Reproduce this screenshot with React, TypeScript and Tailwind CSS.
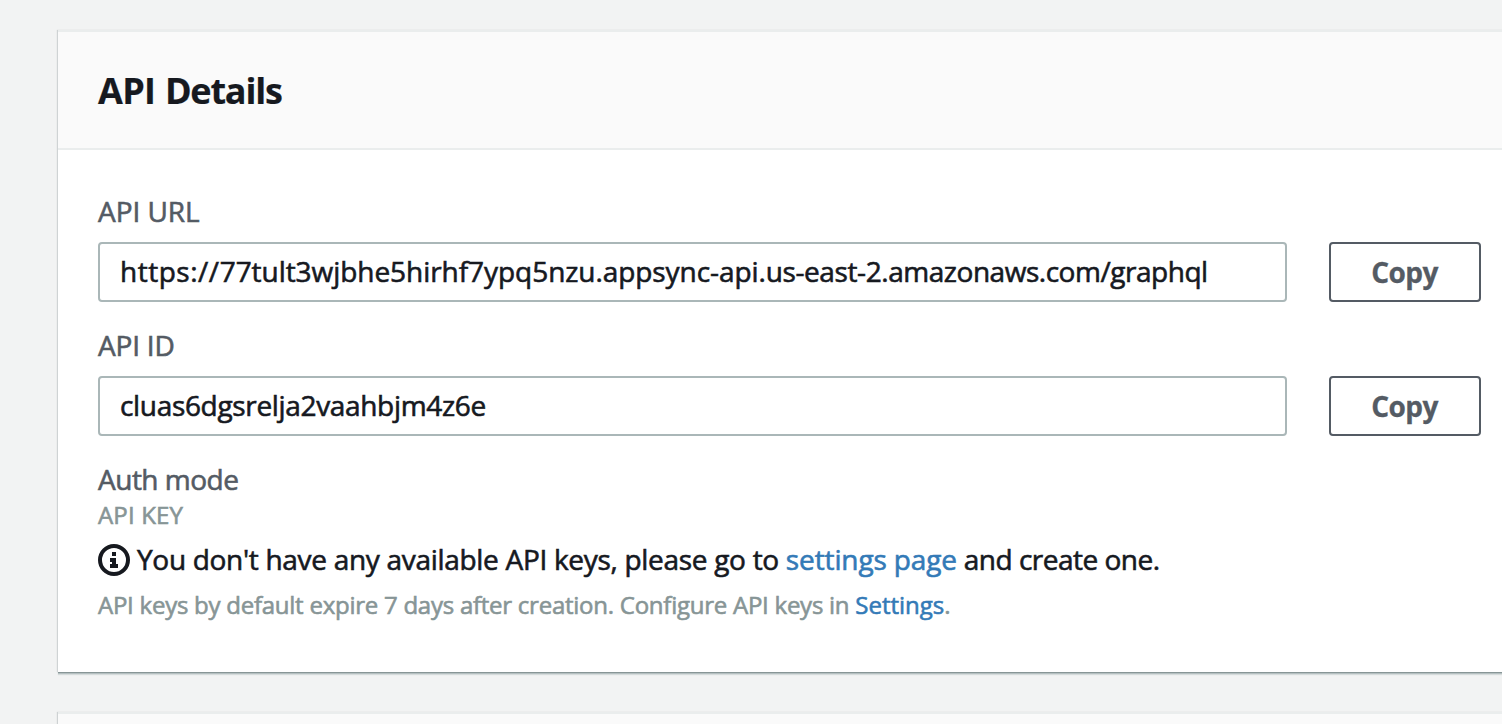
import type { ReactNode } from "react";

function Field({ label, labelClass, children }: { label: string; labelClass: string; children: ReactNode }) {
  return (
    <div className="flex flex-col">
      <label className={`h-[51px] whitespace-nowrap text-[28px] leading-10 text-[#545b64] ${labelClass}`}>{label}</label>
      <div className="flex items-center gap-[42px]">
        <div className="flex h-[60px] w-[1189px] items-center rounded-[4px] border-2 border-[#aab7b8] bg-white px-5 pb-0.5">
          <span className="whitespace-nowrap text-[28px] leading-10">{children}</span>
        </div>
        <button className="flex h-[60px] w-[152px] items-center justify-center rounded-[4px] border-2 border-[#545b64] bg-white pr-px text-[28px] font-bold leading-10 tracking-[-0.6px] text-[#545b64] [-webkit-text-stroke:0.3px]">
          Copy
        </button>
      </div>
    </div>
  );
}

function Link({ children, className }: { children: ReactNode; className: string }) {
  return <a className={`text-[#337ab7] ${className}`}>{children}</a>;
}

function InfoIcon() {
  return (
    <svg width="32" height="32" viewBox="0 0 32 32" className="shrink-0">
      <circle cx="16" cy="16" r="14" fill="none" stroke="#16191f" strokeWidth="4" />
      <path d="M14 8h4v4h-4zM12 14h6v6h2v4h-8v-4h2v-2h-2z" fill="#16191f" />
    </svg>
  );
}

export default function App() {
  return (
    <main className="flex h-[724px] w-[1502px] flex-col gap-10 overflow-hidden bg-[#f2f3f3] pl-[58px] pt-[30px] font-['Open_Sans',sans-serif] text-[#16191f] [-webkit-text-stroke:0.6px]">
      <section className="h-[642px] w-[1504px] shrink-0 border-t-2 border-[#eaeded] bg-white shadow-[0_1px_0_0_#879596,0_2px_0_0_#b4bfc0,0_3px_1px_0_#d5dbdb,-1px_0_1px_0_rgba(0,28,36,0.15)]">
        <header className="flex h-[118px] items-center border-b-2 border-[#eaeded] bg-[#fafafa] px-10 pt-0.5">
          <h2 className="whitespace-nowrap text-[36px] font-bold leading-[44px] tracking-[-1.2px] [-webkit-text-stroke:0.2px] [word-spacing:1px]">
            <span className="tracking-[-0.7px]">API </span>Details
          </h2>
        </header>
        <div className="flex flex-col px-10 pt-[41px]">
          <div className="flex flex-col gap-[23px]">
            <Field label="API URL" labelClass="tracking-[-0.05px]">
              <span className="tracking-[0.52px]">https://</span>
              <span className="tracking-[-0.05px]">77tult3wjbhe5hirhf7ypq5nzu.</span>
              <span className="tracking-[-0.08px]">appsync-api.</span>
              <span className="tracking-[-0.4px]">us-east-2.</span>
              <span className="tracking-[-0.47px]">amazonaws.com/graphql</span>
            </Field>
            <Field label="API ID" labelClass="tracking-[-0.2px]">
              <span className="tracking-[-0.33px]">cluas6dgsrelja2vaahbjm4z6e</span>
            </Field>
          </div>
          <p className="mt-[23px] whitespace-nowrap text-[28px] leading-10 tracking-[-0.5px] text-[#545b64]">Auth mode</p>
          <p className="whitespace-nowrap text-[24px] leading-8 tracking-[0.15px] text-[#879596]">API KEY</p>
          <div className="mt-[9px] flex h-10 items-center gap-[7px] whitespace-nowrap text-[28px] leading-10">
            <InfoIcon />
            <p className="pb-0.5 tracking-[-0.5px]">
              <span className="tracking-[-0.3px]">You don't have any available API keys, please go to </span>
              <Link className="tracking-[-0.12px]">settings page</Link> and create one.
            </p>
          </div>
          <p className="mt-[7px] whitespace-nowrap text-[24px] leading-9 tracking-[-0.25px] text-[#879596]">
            API keys by default expire 7 days after creation. Configure API keys in <Link className="tracking-[0px]">Settings</Link>.
          </p>
        </div>
      </section>
      <section className="h-20 w-[1504px] shrink-0 border-t-2 border-[#eaeded] bg-[#fafafa] shadow-[-1px_0_1px_0_rgba(0,28,36,0.15)]" />
    </main>
  );
}
